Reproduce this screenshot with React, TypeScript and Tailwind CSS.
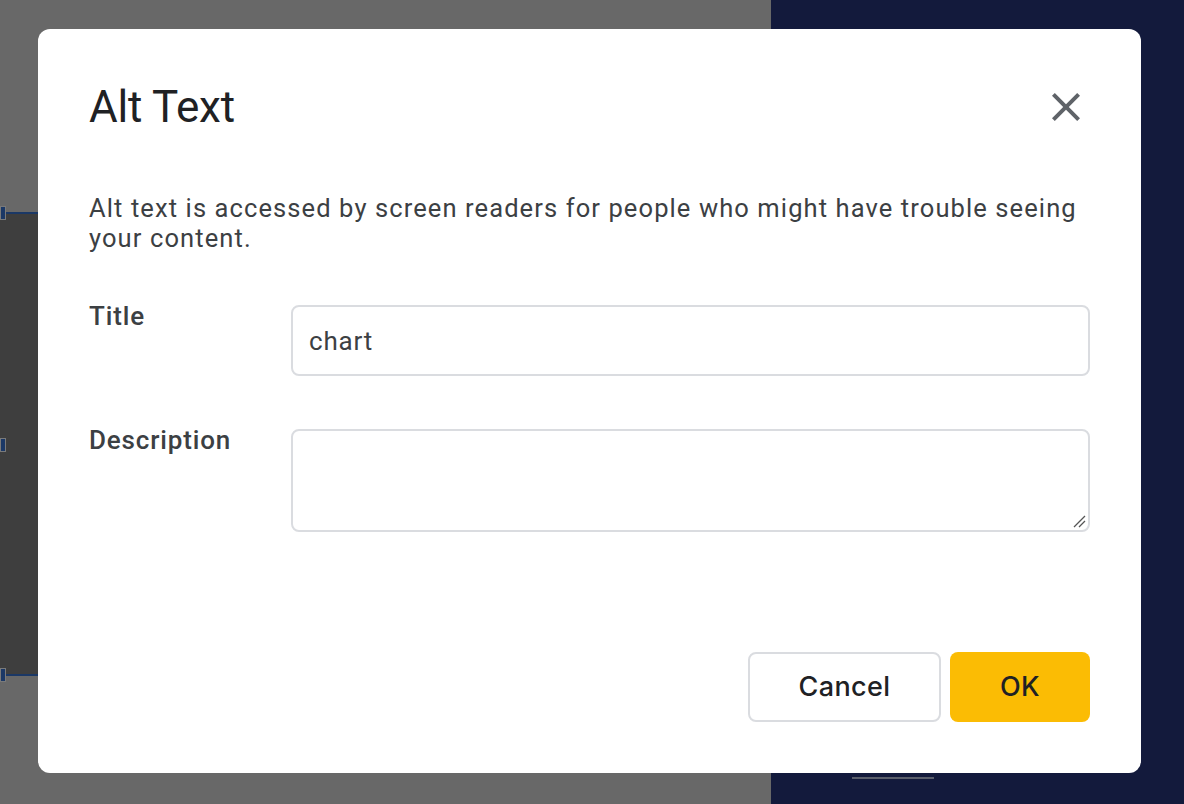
import React from "react";

export default function App() {
  return (
    <div className="relative w-[1184px] h-[804px] overflow-hidden flex" style={{ fontFamily: "Roboto, 'Liberation Sans', sans-serif" }}>
      {/* background page */}
      <div className="w-[771px] h-full bg-[#686868] flex flex-col pt-[212px]">
        <div className="relative w-[400px] h-[464px] bg-[#3e3e3e] border-y-2 border-[#1b3866]">
          <div className="absolute left-0 top-[-8px] w-[6px] h-[14px] bg-[#1b3866] border border-[#7a7a7a]" />
          <div className="absolute left-0 top-[224px] w-[6px] h-[14px] bg-[#1b3866] border border-[#7a7a7a]" />
          <div className="absolute left-0 bottom-[-8px] w-[6px] h-[14px] bg-[#1b3866] border border-[#7a7a7a]" />
        </div>
      </div>
      <div className="flex-1 h-full bg-[#131a3c] flex flex-col justify-end items-start pb-[25px] pl-[81px]">
        <div className="w-[82px] h-[2px] bg-[#5b5f6c]" />
      </div>

      {/* modal */}
      <div className="absolute left-[38px] top-[29px] w-[1103px] h-[744px] rounded-[12px] bg-white flex flex-col px-[51px] pt-[52px] pb-[51px]">
        <div className="flex items-center justify-between h-[52px]">
          <h1 className="text-[44px] leading-[52px] text-[#202124] font-normal tracking-[-0.2px]">Alt Text</h1>
          <button className="w-[48px] h-[48px] flex items-center justify-center">
            <svg width="48" height="48" viewBox="0 0 24 24">
              <path d="M19 6.41 17.59 5 12 10.59 6.41 5 5 6.41 10.59 12 5 17.59 6.41 19 12 13.41 17.59 19 19 17.59 13.41 12z" fill="#5f6368" />
            </svg>
          </button>
        </div>
        <p className="mt-[60px] text-[25.5px] leading-[30px] tracking-[1.1px] text-[#3c4043]">
          Alt text is accessed by screen readers for people who might have trouble seeing your content.
        </p>
        <div className="mt-[48px] flex flex-col gap-[49px]">
          <div className="flex items-start">
            <label className="w-[202px] shrink-0 text-[26px] leading-[30px] font-medium tracking-[0.85px] text-[#3c4043]">Title</label>
            <div className="mt-[4px] flex-1 h-[71px] border-2 border-[#dadce0] rounded-[8px] flex items-center px-[16px] pt-[2px] text-[26px] tracking-[0.8px] text-[#3c4043]">
              chart
            </div>
          </div>
          <div className="flex items-start">
            <label className="w-[202px] shrink-0 text-[26px] leading-[30px] font-medium tracking-[0.85px] text-[#3c4043]">Description</label>
            <div className="mt-[4px] relative flex-1 h-[103px] border-2 border-[#dadce0] rounded-[8px]">
              <svg className="absolute right-[2px] bottom-[2px]" width="16" height="16" viewBox="0 0 16 16">
                <path d="M15 4 4 15M15 9 9 15" stroke="#555" strokeWidth="1.3" />
              </svg>
            </div>
          </div>
        </div>
        <div className="mt-auto flex justify-end gap-[9px]" style={{ fontFamily: "Inter, Roboto, sans-serif" }}>
          <button className="w-[193px] h-[70px] border-2 border-[#dadce0] rounded-[8px] text-[27px] font-medium text-[#202124] tracking-[0.4px]">Cancel</button>
          <button className="w-[140px] h-[70px] bg-[#fbbc04] rounded-[8px] text-[27px] font-medium text-[#202124] tracking-[0.3px]">OK</button>
        </div>
      </div>
    </div>
  );
}
